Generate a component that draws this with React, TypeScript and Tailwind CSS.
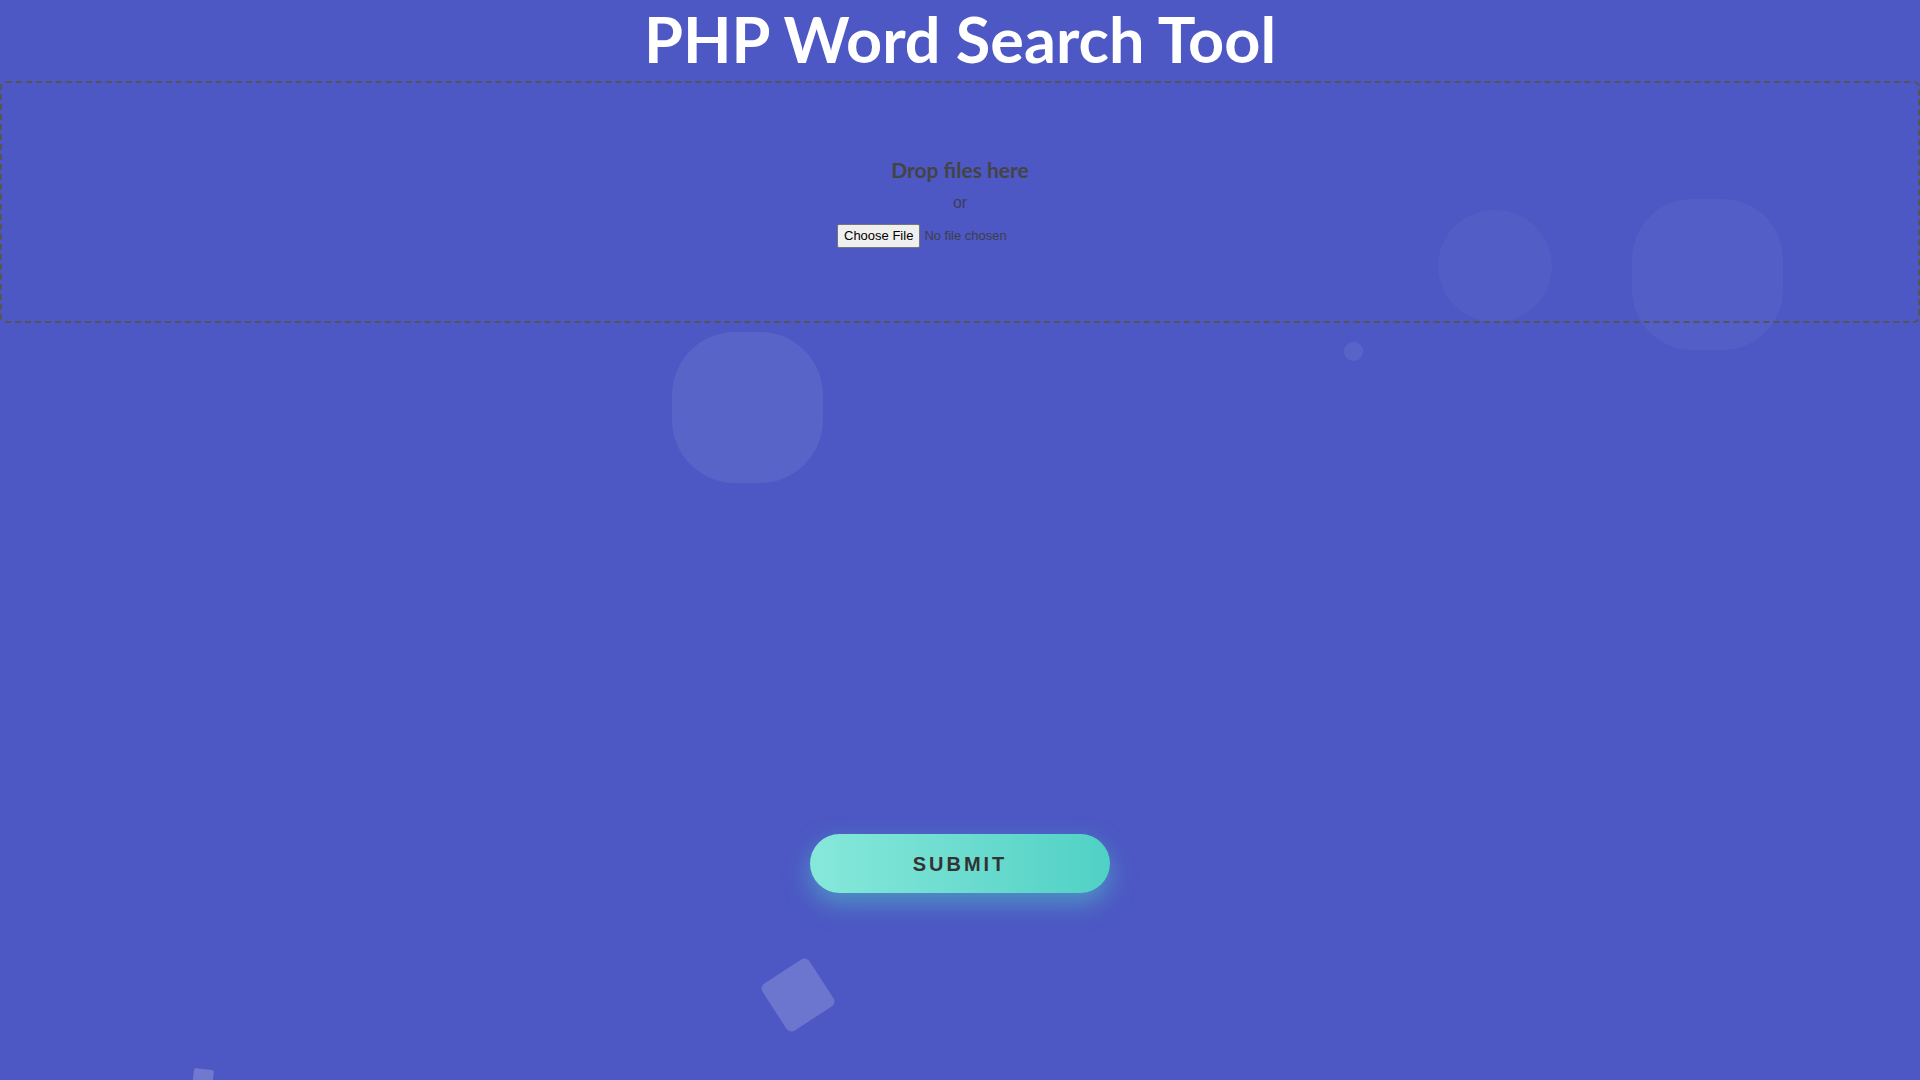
export default function App() {
  return (
    <div className="relative min-h-screen w-full overflow-hidden bg-[#4d58c4]" style={{ fontFamily: "Lato, 'Noto Sans', sans-serif" }}>
      {/* floating background squares */}
      <ul className="pointer-events-none absolute inset-0">
        <li className="absolute left-[672px] top-[332px] h-[151px] w-[151px] rounded-[42%] bg-white/[0.07]"></li>
        <li className="absolute left-[1438px] top-[210px] h-[112px] w-[114px] rounded-full bg-white/[0.03]"></li>
        <li className="absolute left-[1632px] top-[199px] h-[151px] w-[151px] rounded-[40%] bg-white/[0.04]"></li>
        <li className="absolute left-[1344px] top-[342px] h-[19px] w-[19px] rounded-full bg-white/[0.07]"></li>
        <li className="absolute left-[770px] top-[967px] h-[56px] w-[56px] rotate-[-33deg] rounded-[6px] bg-white/[0.18]"></li>
        <li className="absolute left-[193px] top-[1069px] h-[20px] w-[20px] rotate-[6deg] rounded-[2px] bg-white/[0.2]"></li>
      </ul>

      <div className="relative flex flex-col items-center">
        <h1 className="mt-[1px] text-[63px] font-bold leading-[76px] text-white">PHP Word Search Tool</h1>

        <div className="mt-[4px] flex h-[242px] w-full flex-col items-center justify-center rounded-[6px] border-2 border-dashed border-[#555]">
          <p className="text-[21px] font-bold leading-[28px] text-[#444]">Drop files here</p>
          <p className="mt-[9px] text-[16px] leading-[20px] text-[#3d3d5a]" style={{ fontFamily: "'Liberation Sans', Arial, sans-serif" }}>or</p>
          <input type="file" className="mt-[11px] text-[13px] text-[#3d3d4a] file:mr-[4px] file:rounded-[2px] file:border file:border-[#767676] file:bg-[#efefef] file:px-[6px] file:py-[1px] file:text-black" style={{ fontFamily: "'Liberation Sans', Arial, sans-serif" }} />
        </div>

        <button className="mt-[511px] h-[59px] w-[300px] rounded-full bg-gradient-to-r from-[#86e8da] to-[#4fd1c5] text-[20px] font-bold tracking-[3px] text-[#333] shadow-[0_10px_25px_rgba(79,209,197,0.5)]" style={{ fontFamily: "'Liberation Sans', Arial, sans-serif" }}>
          SUBMIT
        </button>
      </div>
    </div>
  );
}
